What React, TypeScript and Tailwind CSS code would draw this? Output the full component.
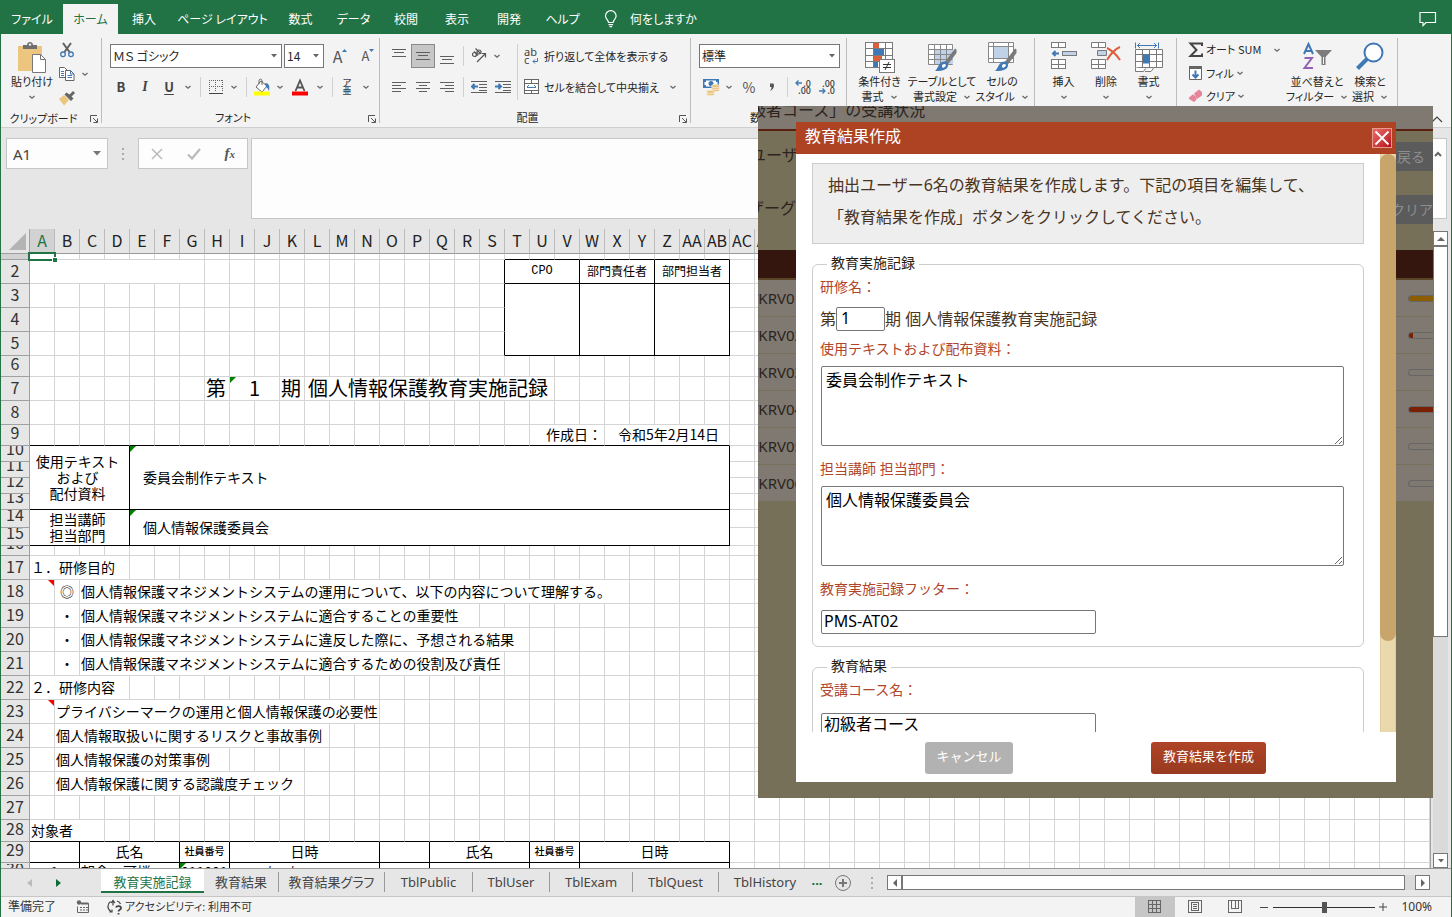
import React from "react";

/* ---------- small shared pieces ---------- */

const Chevron = ({ className = "" }: { className?: string }) => (
  <svg viewBox="0 0 8 8" className={`size-2 shrink-0 ${className}`} fill="none" stroke="#666" strokeWidth="1.2" aria-hidden="true">
    <path d="M1.500 3 4 5.300 6.500 3" />
  </svg>
);

const Caret = () => (
  <svg viewBox="0 0 6 4" className="h-1 w-1.5" aria-hidden="true">
    <path d="M0 0h6L3 3.500z" fill="#666" />
  </svg>
);

const Launcher = () => (
  <button type="button" aria-label="詳細設定" className="absolute right-1 bottom-1 size-2">
    <svg viewBox="0 0 8 8" className="size-2" fill="none" stroke="#555" strokeWidth="1">
      <path d="M.5 7V.5H7M3 3l4 4M7.500 3.500v4h-4" />
    </svg>
  </button>
);

const VSep = ({ className = "" }: { className?: string }) => (
  <div className={`flex justify-center ${className}`}>
    <div className="h-5 w-px bg-[#d0d0d0]" />
  </div>
);

function Group({ label, width, launcher, children }: { label: string; width: string; launcher?: boolean; children: React.ReactNode }) {
  return (
    <section className={`relative flex shrink-0 flex-col pt-1 ${width}`} aria-label={label}>
      <div className="flex h-[70px]">{children}</div>
      <div className={`text-center leading-5 ${launcher ? "pr-4" : ""}`}>{label}</div>
      {launcher && <Launcher />}
      <div className="absolute top-1 right-0 bottom-1 w-px bg-[#bdbdbd]" />
    </section>
  );
}

const Tool = ({ label, w, children, on }: { label: string; w: string; children: React.ReactNode; on?: boolean }) => (
  <button
    type="button"
    aria-label={label}
    className={`flex h-6 shrink-0 items-center justify-center ${w} ${on ? "border border-[#8a8a8a] bg-[#c6c6c6]" : ""}`}
  >
    {children}
  </button>
);

function BigButton({ w, icon, lines, chevronBelow }: { w: string; icon: React.ReactNode; lines: string[]; chevronBelow?: boolean }) {
  return (
    <button type="button" className={`flex shrink-0 flex-col items-center pt-1 leading-[15px] whitespace-nowrap ${w}`}>
      <span className="flex h-8 items-start">{icon}</span>
      {lines.map((l, i) => (
        <span key={l} className="flex items-center gap-1.5">
          {l}
          {!chevronBelow && i === lines.length - 1 && <Chevron />}
        </span>
      ))}
      {chevronBelow && <Chevron className="mt-1" />}
    </button>
  );
}

const Lines = ({ d }: { d: string }) => (
  <svg viewBox="0 0 16 16" className="size-4" fill="none" stroke="#5f5f5f" strokeWidth="1" shapeRendering="crispEdges">
    <path d={d} />
  </svg>
);

/* ---------- ribbon icons ---------- */

const PasteIcon = () => (
  <svg viewBox="0 0 30 32" className="h-8 w-[30px]">
    <path d="M1 4h24v25H1z" fill="#ecc57f" />
    <path d="M6 7V3h4c0-4 6-4 6 0h4v4z" fill="#6f6f6f" />
    <circle cx="13" cy="2.6" r="1.2" fill="#f3f3f3" />
    <path d="M15.500 12.500h8l5 5v13h-13z" fill="#fff" stroke="#777" />
    <path d="M23.500 12.500v5h5" fill="none" stroke="#777" />
  </svg>
);
const CutIcon = () => (
  <svg viewBox="0 0 16 16" className="size-4" fill="none">
    <path d="M4 1l6.500 9M12 1 5.500 10" stroke="#5f5f5f" strokeWidth="2" />
    <circle cx="4" cy="12.300" r="2.300" stroke="#3f78b4" strokeWidth="1.300" />
    <circle cx="12" cy="12.300" r="2.300" stroke="#3f78b4" strokeWidth="1.300" />
  </svg>
);
const CopyIcon = () => (
  <svg viewBox="0 0 16 16" className="size-4" strokeWidth="1">
    <path d="M.5 1.500h5l3 3v7h-8z" fill="#fff" stroke="#666" />
    <path d="M2 5.500h3M2 7.500h3M2 9.500h3" stroke="#3f78b4" />
    <path d="M6.500 4.500h5l3.500 3.500v6.500H6.500z" fill="#fff" stroke="#666" />
    <path d="M11.500 4.500V8H15M8.500 9.500h4.500M8.500 11.500h4.500" stroke="#3f78b4" fill="none" />
  </svg>
);
const PainterIcon = () => (
  <svg viewBox="0 0 16 16" className="size-4">
    <path d="M0 9l5-4 5 5-5 5.500z" fill="#ecc57f" />
    <path d="M5.500 4.500l2-2 3 2L14 1l2 2-3.500 3.500 2 2-2.500 2.500z" fill="#666" />
  </svg>
);
const BorderIcon = () => (
  <svg viewBox="0 0 14 14" className="size-3.5" fill="none" stroke="#666" shapeRendering="crispEdges">
    <path d="M0 .5h14M0 6.500h14M.5 0v12M6.500 0v12M13.500 0v12" strokeDasharray="1 1" />
    <path d="M0 13.500h14" stroke="#444" />
  </svg>
);
const BucketIcon = () => (
  <svg viewBox="0 0 18 18" className="size-[18px]" fill="none">
    <path d="M3 9l5-6 6 5-5 6z" fill="#fff" stroke="#666" />
    <path d="M6 6V3c0-2.500 3-2.500 3 0v4" stroke="#666" />
    <path d="M12 5c4 0 5 3 4 8-1-2-1-3-3-4z" fill="#3f78b4" />
    <path d="M1 13.500h16v4H1z" fill="#ff0" />
  </svg>
);
const FontColorIcon = () => (
  <svg viewBox="0 0 16 18" className="h-[18px] w-4">
    <path d="M3.500 13 8 2.500 12.500 13M5.200 9.500h5.600" fill="none" stroke="#555" strokeWidth="1.800" />
    <path d="M0 13.500h16v4H0z" fill="#f00" />
  </svg>
);
const OrientIcon = () => (
  <svg viewBox="0 0 16 16" className="size-4" fill="none" stroke="#555" strokeWidth="1.200">
    <circle cx="3.500" cy="6.500" r="2" />
    <path d="M3 3.500 7 7.500" />
    <circle cx="8" cy="4" r="2" />
    <path d="M4.500.5 9.500 5.500" />
    <path d="M6 14l8-8M10.500 5.500H14.500V9.500" />
  </svg>
);
const WrapIcon = () => (
  <span className="relative flex h-4 w-4 flex-col items-start font-['Noto_Sans',sans-serif] text-[11px] leading-[8px] text-[#444]">
    <span>ab</span>
    <span>c</span>
    <svg viewBox="0 0 6 6" className="absolute right-0.5 bottom-0 size-1.5" fill="none" stroke="#3f78b4">
      <path d="M5.500 0v3.500H1M3 1.500 1 3.500l2 2" />
    </svg>
  </span>
);
const MergeIcon = () => (
  <svg viewBox="0 0 16 16" className="size-4" fill="#fff" stroke="#666" shapeRendering="crispEdges">
    <path d="M.5.5h14v14H.5zM.5 4.500h14M.5 11.500h14M7.500.5v4M7.500 11.500v3" />
    <path d="M3 8h9M4.500 6.500 3 8l1.500 1.500M10.500 6.500 12 8l-1.500 1.500" stroke="#3f78b4" fill="none" />
  </svg>
);
const IndentIcon = ({ back }: { back?: boolean }) => (
  <svg viewBox="0 0 16 14" className="h-3.5 w-4" fill="none" stroke="#5f5f5f" shapeRendering="crispEdges">
    <path d="M0 1.500h16M8 4.500h8M8 7.500h8M8 10.500h8M0 12.500h16" />
    <path d={back ? "M7 6.500H1M3.500 4 1 6.500 3.500 9" : "M0 6.500h6M3.500 4 6 6.500 3.500 9"} stroke="#3f78b4" strokeWidth="2" shapeRendering="auto" />
  </svg>
);
const MoneyIcon = () => (
  <svg viewBox="0 0 18 18" className="size-[18px]">
    <path d="M1 1h16v9H1z" fill="#3f78b4" />
    <path d="M2.500 2.500h13v6h-13z" fill="#fff" />
    <path d="M2 2h2v2H2zM14 2h2v2h-2zM2 7h2v2H2z" fill="#3f78b4" />
    <circle cx="9" cy="5.500" r="2.500" fill="#3f78b4" />
    <g fill="#ecc57f" stroke="#f3f3f3" strokeWidth=".6">
      <ellipse cx="13.500" cy="12" rx="4" ry="1.700" />
      <ellipse cx="13.500" cy="10" rx="4" ry="1.700" />
      <ellipse cx="13.500" cy="8" rx="4" ry="1.700" />
      <ellipse cx="8.500" cy="16" rx="4" ry="1.700" />
      <ellipse cx="8.500" cy="13.800" rx="4" ry="1.700" />
    </g>
  </svg>
);
const DecimalIcon = ({ more }: { more?: boolean }) => (
  <span className="relative flex w-4 flex-col items-end text-[9px] leading-[7px] font-medium text-[#444]">
    <span>{more ? ".0" : ".00"}</span>
    <span>{more ? ".00" : ".0"}</span>
    <svg viewBox="0 0 7 6" className={`absolute left-0 h-1.5 w-[7px] ${more ? "top-0" : "bottom-0"}`} fill="none" stroke="#3f78b4" strokeWidth="1.300">
      <path d={more ? "M7 3H1M3.500.5 1 3l2.500 2.500" : "M0 3h6M3.500.5 6 3 3.500 5.500"} />
    </svg>
  </span>
);
const CondIcon = () => (
  <svg viewBox="0 0 30 31" className="h-[31px] w-[30px]" stroke="#7a7a7a" shapeRendering="crispEdges">
    <path d="M.5.5h27v25H.5z" fill="#fff" />
    <path d="M.5 6.500h27M.5 13.500h27M.5 19.500h27M8.500.5v25M20.500.5v25" fill="none" />
    <path d="M9 1h5v5H9zM9 14h8v5H9z" fill="#dd5f3c" stroke="none" />
    <path d="M9 7h10v6H9zM9 20h4v5H9z" fill="#3f78b4" stroke="none" />
    <path d="M14.500 17.500h15v13h-15z" fill="#fff" />
    <path d="M18 22.500h8M18 25.500h8M24 20l-4 8" stroke="#333" shapeRendering="auto" />
  </svg>
);
const Brush = () => (
  <g stroke="none">
    <path d="M17 21 28 6.500l1.500 1V11L20.500 23z" fill="#7a7a7a" />
    <path d="M15 20c3-1.500 6 0 6 3 0 4-4 6-13 6 3-2 3-7 7-9z" fill="#3f78b4" />
    <path d="M15 24c0-2 3-3 4-1-1 3-4 4-4 1z" fill="#fff" />
  </g>
);
const TableStyleIcon = () => (
  <svg viewBox="0 0 30 30" className="size-[30px]">
    <path d="M1.500 2.500h24v20h-24z" fill="#fff" stroke="#888" />
    <path d="M8 8h18v14H8z" fill="#c0d2e8" />
    <path d="M1.500 7.500h24M1.500 12.500h24M1.500 17.500h24M7.500 2.500v20M13.500 2.500v20M19.500 2.500v20" stroke="#888" fill="none" />
    <Brush />
  </svg>
);
const CellStyleIcon = () => (
  <svg viewBox="0 0 30 30" className="size-[30px]">
    <path d="M1.500.5h25v20h-25z" fill="#fff" stroke="#888" />
    <path d="M1.500 4.500h25M1.500 16.500h25M6.500.5v20M21.500.5v20" stroke="#888" fill="none" />
    <path d="M7 5h14v11H7z" fill="#c0d2e8" />
    <Brush />
  </svg>
);
const InsertIcon = () => (
  <svg viewBox="0 0 28 30" className="h-[30px] w-7" fill="#fff" stroke="#7a7a7a" shapeRendering="crispEdges">
    <path d="M1.500.5h14v5h-14zM8.500.5v5M1.500 17.500h14v9h-14zM8.500 17.500v9M1.500 22.500h14" />
    <path d="M12.500 9.500h14v4h-14z" fill="#c0d2e8" />
    <path d="M9 11.500H3M5.500 9 3 11.500 5.500 14" stroke="#3f78b4" strokeWidth="2" fill="none" shapeRendering="auto" />
  </svg>
);
const DeleteIcon = () => (
  <svg viewBox="0 0 30 30" className="size-[30px]" fill="#fff" stroke="#7a7a7a">
    <path d="M.5.500h14v5H.5zM7.500.5v5M.5 17.500h14v9H.5zM7.500 17.500v9M.5 22.500h14" />
    <path d="M6.500 8.500h9v5h-9z" fill="#c0d2e8" />
    <path d="M16 6c4 2 9 6 13 12M29 5c-5 2-10 8-13 13" fill="none" stroke="#dd5f3c" strokeWidth="2" />
  </svg>
);
const FormatIcon = () => (
  <svg viewBox="0 0 30 32" className="h-8 w-[30px]" fill="#fff" stroke="#7a7a7a">
    <path d="M1.500 7.500h27v18h-27z" />
    <path d="M1.500 12.500h27M1.500 19.500h27M8.500 7.500v18M15.500 7.500v18M22.500 7.500v18" fill="none" />
    <path d="M9 12.500h7v9H9z" fill="#3f78b4" stroke="none" />
    <path d="M1.500 25.500v4h8l2-3M11 29.500h6l3-4" />
    <path d="M3 3.500h20M6 1 3.500 3.500 6 6M20 1l2.500 2.500L20 6M1.500.5v6M24.500.5v6" fill="none" stroke="#3f78b4" />
  </svg>
);
const SortIcon = () => (
  <svg viewBox="0 0 30 30" className="size-[30px]" fill="none" strokeWidth="2">
    <path d="M2 12 6.500 2 11 12M3.500 9h6" stroke="#3f78b4" />
    <path d="M2.500 16h7.500L2.500 26H11" stroke="#9262b5" />
    <path d="M13 8h17l-6.500 7v8h-4v-8z" fill="#7d7d7d" />
    <path d="M21.500 15v7" stroke="#f3f3f3" strokeWidth="1" />
  </svg>
);
const FindIcon = () => (
  <svg viewBox="0 0 28 30" className="h-[30px] w-7" fill="none" stroke="#3f78b4">
    <circle cx="17.500" cy="10.500" r="9" strokeWidth="2" fill="#fff" />
    <path d="M11 17 1.500 26.500" strokeWidth="4" />
  </svg>
);

/* ---------- ribbon ---------- */

const tabs: [string, string][] = [
  ["ファイル", "w-[62px]"],
  ["ホーム", "w-[55px]"],
  ["挿入", "w-[52px]"],
  ["ページ レイアウト", "w-[105px]"],
  ["数式", "w-[51px]"],
  ["データ", "w-[55px]"],
  ["校閲", "w-[50px]"],
  ["表示", "w-[52px]"],
  ["開発", "w-[52px]"],
  ["ヘルプ", "w-[55px]"],
];

const TabBar = () => (
  <nav className="flex h-[34px] shrink-0 items-end bg-[#217346] text-[12px] text-white" aria-label="リボン">
    {tabs.map(([t, w]) => (
      <button key={t} type="button" className={`h-[30px] shrink-0 whitespace-nowrap ${w} ${t === "ホーム" ? "bg-[#f3f3f3] text-[#217346]" : ""}`}>
        {t}
      </button>
    ))}
    <button type="button" className="ml-3.5 flex h-[30px] items-center gap-3">
      <svg viewBox="0 0 14 18" className="h-[18px] w-3.5" fill="none" stroke="#fff" strokeWidth="1.200">
        <path d="M4.500 12.500C4.500 10 1.500 9 1.500 6a5.300 5.300 0 0 1 10.600 0c0 3-3 4-3 6.500zM4.500 14.700h4.600M5.500 16.700h2.600" />
      </svg>
      何をしますか
    </button>
    <button type="button" aria-label="コメント" className="mr-3.5 ml-auto flex h-[30px] items-center">
      <svg viewBox="0 0 18 16" className="h-4 w-[18px]" fill="none" stroke="#fff" strokeWidth="1.200">
        <path d="M1 1.500h15.500v10H7L4 14.500v-3H1z" />
      </svg>
    </button>
  </nav>
);

function Combo({ label, value, w }: { label: string; value: string; w: string }) {
  return (
    <label className={`relative flex h-6 shrink-0 items-center border border-[#767676] bg-white ${w}`}>
      <span className="sr-only">{label}</span>
      <select className="h-full w-full appearance-none bg-transparent pl-0.5 text-[12px] leading-5 outline-none" defaultValue={value}>
        <option>{value}</option>
      </select>
      <span className="pointer-events-none absolute right-1">
        <Caret />
      </span>
    </label>
  );
}

const Ribbon = () => (
  <div className="relative flex h-[94px] shrink-0 border-b border-[#cfcfcf] bg-[#f3f3f3] text-[11px] text-[#262626]">
    <Group label="クリップボード" width="w-[101px]" launcher>
      <BigButton w="w-[58px] pl-1" icon={<PasteIcon />} lines={["貼り付け"]} chevronBelow />
      <div className="flex flex-col">
        <Tool label="切り取り" w="w-4">
          <CutIcon />
        </Tool>
        <div className="flex">
          <Tool label="コピー" w="w-4">
            <CopyIcon />
          </Tool>
          <Tool label="コピーのオプション" w="w-5">
            <Chevron />
          </Tool>
        </div>
        <Tool label="書式のコピー" w="w-4">
          <PainterIcon />
        </Tool>
      </div>
    </Group>

    <Group label="フォント" width="w-[278px]" launcher>
      <div className="flex flex-col gap-[7px] pt-1.5 pl-[7px]">
        <div className="flex gap-0.5 pl-px">
          <Combo label="フォント名" value="ＭＳ ゴシック" w="w-[172px]" />
          <Combo label="フォント サイズ" value="14" w="w-10" />
          <button type="button" aria-label="フォントの拡大" className="flex w-7 items-center justify-center text-[16px] leading-6 text-[#555]">
            A
            <svg viewBox="0 0 5 3" className="mb-3 h-[3px] w-[5px]">
              <path d="M0 3h5L2.500 0z" fill="#3f78b4" />
            </svg>
          </button>
          <button type="button" aria-label="フォントの縮小" className="flex w-6 items-center justify-center text-[13px] leading-6 text-[#555]">
            A
            <svg viewBox="0 0 5 3" className="mb-3 h-[3px] w-[5px]">
              <path d="M0 0h5L2.500 3z" fill="#3f78b4" />
            </svg>
          </button>
        </div>
        <div className="flex items-center text-[13px] leading-5 text-[#444]">
          <Tool label="太字" w="w-6">
            <b>B</b>
          </Tool>
          <Tool label="斜体" w="w-6">
            <i className="font-['Liberation_Serif',serif] text-[14px] font-bold">I</i>
          </Tool>
          <Tool label="下線" w="w-6">
            <span className="font-bold underline underline-offset-2">U</span>
          </Tool>
          <Tool label="下線の種類" w="w-3.5">
            <Chevron />
          </Tool>
          <VSep className="w-[11px]" />
          <Tool label="罫線" w="w-5">
            <BorderIcon />
          </Tool>
          <Tool label="罫線の種類" w="w-4">
            <Chevron />
          </Tool>
          <VSep className="w-2" />
          <Tool label="塗りつぶしの色" w="w-6">
            <BucketIcon />
          </Tool>
          <Tool label="塗りつぶしの色の選択" w="w-3">
            <Chevron />
          </Tool>
          <Tool label="フォントの色" w="w-7">
            <FontColorIcon />
          </Tool>
          <Tool label="フォントの色の選択" w="w-3">
            <Chevron />
          </Tool>
          <VSep className="w-3" />
          <Tool label="ふりがな" w="w-[18px]">
            <span className="flex flex-col items-center text-[9px] leading-[8px] font-medium">
              <span>ア</span>
              <span>亜</span>
            </span>
          </Tool>
          <Tool label="ふりがなの設定" w="w-5">
            <Chevron />
          </Tool>
        </div>
      </div>
    </Group>

    <Group label="配置" width="w-[311px]" launcher>
      <div className="flex flex-col gap-[7px] pt-1.5 pl-[7px]">
        <div className="flex items-center">
          <Tool label="上揃え" w="w-6">
            <Lines d="M1 1.500h14M3 4.500h10M1 8.500h14" />
          </Tool>
          <Tool label="上下中央揃え" w="w-6" on>
            <Lines d="M1 4.500h14M3 7.500h10M1 11.500h14" />
          </Tool>
          <Tool label="下揃え" w="w-6">
            <Lines d="M1 8.500h14M3 11.500h10M1 15.500h14" />
          </Tool>
          <VSep className="w-2" />
          <Tool label="方向" w="w-6">
            <OrientIcon />
          </Tool>
          <Tool label="方向の選択" w="w-3">
            <Chevron />
          </Tool>
        </div>
        <div className="flex items-center">
          <Tool label="左揃え" w="w-6">
            <Lines d="M1 3.500h14M1 6.500h9M1 9.500h14M1 12.500h9" />
          </Tool>
          <Tool label="中央揃え" w="w-6">
            <Lines d="M1 3.500h14M4 6.500h8M1 9.500h14M4 12.500h8" />
          </Tool>
          <Tool label="右揃え" w="w-6">
            <Lines d="M1 3.500h14M6 6.500h9M1 9.500h14M6 12.500h9" />
          </Tool>
          <VSep className="w-2" />
          <Tool label="インデントを減らす" w="w-6">
            <IndentIcon back />
          </Tool>
          <Tool label="インデントを増やす" w="w-6">
            <IndentIcon />
          </Tool>
        </div>
      </div>
      <div className="mt-1.5 ml-0.5 h-14 w-px bg-[#d0d0d0]" />
      <div className="flex flex-col gap-[7px] pt-1.5 pl-1.5">
        <button type="button" className="flex h-6 items-center gap-1 whitespace-nowrap">
          <WrapIcon />
          折り返して全体を表示する
        </button>
        <button type="button" className="flex h-6 items-center gap-1 whitespace-nowrap">
          <MergeIcon />
          セルを結合して中央揃え
          <Chevron className="ml-1.5" />
        </button>
      </div>
    </Group>

    <Group label="数値" width="w-[156px]" launcher>
      <div className="flex flex-col gap-[7px] pt-1.5 pl-2">
        <Combo label="表示形式" value="標準" w="w-[141px]" />
        <div className="flex items-center text-[14px] leading-5 text-[#555]">
          <Tool label="通貨表示形式" w="w-6">
            <MoneyIcon />
          </Tool>
          <Tool label="通貨の選択" w="w-3">
            <Chevron />
          </Tool>
          <Tool label="パーセント" w="w-7">
            %
          </Tool>
          <Tool label="桁区切り" w="w-[18px]">
            <svg viewBox="0 0 6 8" className="h-2 w-1.5">
              <path d="M1 .5h3.500L5 2.500C5 5 3.500 7 1 8c1-1.500 1.500-2.500 1.500-4H1z" fill="#555" />
            </svg>
          </Tool>
          <VSep className="w-3" />
          <Tool label="小数点以下を増やす" w="w-5">
            <DecimalIcon more />
          </Tool>
          <Tool label="小数点以下を減らす" w="w-7">
            <DecimalIcon />
          </Tool>
        </div>
      </div>
    </Group>

    <Group label="スタイル" width="w-[188px]">
      <BigButton w="w-[65px]" icon={<CondIcon />} lines={["条件付き", "書式"]} />
      <BigButton w="w-[60px]" icon={<TableStyleIcon />} lines={["テーブルとして", "書式設定"]} />
      <BigButton w="w-[60px]" icon={<CellStyleIcon />} lines={["セルの", "スタイル"]} />
    </Group>

    <Group label="セル" width="w-[142px]">
      <BigButton w="w-[57px]" icon={<InsertIcon />} lines={["挿入"]} chevronBelow />
      <BigButton w="w-7" icon={<DeleteIcon />} lines={["削除"]} chevronBelow />
      <BigButton w="w-[57px]" icon={<FormatIcon />} lines={["書式"]} chevronBelow />
    </Group>

    <Group label="編集" width="w-[221px]">
      <div className="flex w-[110px] flex-col pl-[11px]">
        <button type="button" className="flex h-6 items-center gap-0.5 whitespace-nowrap">
          <svg viewBox="0 0 16 16" className="size-4" fill="none" stroke="#444" strokeWidth="2">
            <path d="M14 4V1.500H2.500L8.500 8l-6 6H14V11.500" />
          </svg>
          オート SUM
          <Chevron className="ml-2.5" />
        </button>
        <button type="button" className="flex h-6 items-center gap-0.5 whitespace-nowrap">
          <svg viewBox="0 0 16 16" className="size-4" fill="#fff" stroke="#666">
            <path d="M1.500 1.500h12v13h-12z" />
            <path d="M1 1h13v3H1z" fill="#666" stroke="none" />
            <path d="M7.500 5.500v7M4.500 9.500l3 3 3-3" fill="none" stroke="#3f78b4" strokeWidth="2" />
          </svg>
          フィル
          <Chevron />
        </button>
        <button type="button" className="flex h-6 items-center gap-0.5 whitespace-nowrap">
          <svg viewBox="0 0 16 16" className="size-4">
            <path d="M6 5.500 11 1.500l3 2.500v3.500L9 11z" fill="#e8849a" />
            <path d="M1 9.500l4-3.200 3.300 2.800v3L6 14l-5-3z" fill="#e8849a" />
          </svg>
          クリア
          <Chevron />
        </button>
      </div>
      <BigButton w="w-[60px]" icon={<SortIcon />} lines={["並べ替えと", "フィルター"]} />
      <BigButton w="w-[46px]" icon={<FindIcon />} lines={["検索と", "選択"]} />
    </Group>
    <button type="button" aria-label="リボンを折りたたむ" className="mt-auto mr-2 mb-1 ml-auto">
      <svg viewBox="0 0 12 8" className="h-2 w-3" fill="none" stroke="#444" strokeWidth="1.200">
        <path d="M1 7l5-5 5 5" />
      </svg>
    </button>
  </div>
);

/* ---------- formula bar ---------- */

const FormulaBar = () => (
  <div className="flex h-[101px] shrink-0 items-start bg-[#e6e6e6] pt-2.5 pr-1 pl-[5px]">
    <label className="relative flex h-[31px] w-[102px] shrink-0 items-center border border-[#c6c6c6] bg-[#fdfdfd]">
      <span className="sr-only">名前ボックス</span>
      <input className="w-full bg-transparent pt-0.5 pl-1.5 font-['Noto_Sans',sans-serif] text-[15px] text-[#444] outline-none" defaultValue="A1" />
      <svg viewBox="0 0 8 5" className="absolute right-1.5 h-[5px] w-2">
        <path d="M0 0h8L4 4.500z" fill="#777" />
      </svg>
    </label>
    <div className="flex h-[31px] w-[30px] shrink-0 flex-col items-center justify-center gap-[3px]">
      <i className="size-0.5 bg-[#aaa]" />
      <i className="size-0.5 bg-[#aaa]" />
      <i className="size-0.5 bg-[#aaa]" />
    </div>
    <div className="flex h-[31px] w-[110px] shrink-0 items-center justify-around border border-[#c6c6c6] bg-[#fdfdfd]">
      <button type="button" aria-label="キャンセル">
        <svg viewBox="0 0 12 12" className="size-3" stroke="#bbb" strokeWidth="1.500">
          <path d="M1 1l10 10M11 1 1 11" />
        </svg>
      </button>
      <button type="button" aria-label="入力">
        <svg viewBox="0 0 14 12" className="h-3 w-3.5" fill="none" stroke="#bbb" strokeWidth="2.200">
          <path d="M1 6.500 5 10.500 13 1" />
        </svg>
      </button>
      <button type="button" aria-label="関数の挿入" className="font-['Liberation_Serif',serif] text-[15px] leading-4 font-bold text-[#555] italic">
        f<span className="text-[11px]">x</span>
      </button>
    </div>
    <div className="ml-[3px] flex h-[81px] flex-1 border border-[#c6c6c6] bg-[#fdfdfd]">
      <textarea aria-label="数式バー" className="flex-1 resize-none bg-transparent outline-none" />
      <button type="button" aria-label="数式バーの展開" className="flex w-4 justify-center pt-3">
        <svg viewBox="0 0 8 6" className="h-1.5 w-2" fill="none" stroke="#666" strokeWidth="2">
          <path d="M1 5l3-3 3 3" />
        </svg>
      </button>
    </div>
  </div>
);

/* ---------- worksheet ---------- */

const COLS = 60;
const rowHeights = [
  6, 24, 24, 24, 24, 21, 24, 24, 21, 16, 16, 16, 16, 18, 18, 10, 24, 24, 24, 24, 24, 24, 24, 24, 24, 24, 24, 22, 21, 18,
];

const colName = (i: number) => (i < 26 ? "" : String.fromCharCode(64 + Math.floor(i / 26))) + String.fromCharCode(65 + (i % 26));

type Cell = { c: number; cs?: number; rs?: number; lines?: string[]; cls?: string; mark?: "error" | "note"; plain?: boolean };

const cells: Record<number, Cell[]> = {
  2: [
    { c: 0, cs: 7, plain: true },
    { c: 19, cs: 3, lines: ["CPO"], cls: "text-center text-[12px] font-['Liberation_Mono',monospace]" },
    { c: 22, cs: 3, lines: ["部門責任者"], cls: "text-center text-[12px]" },
    { c: 25, cs: 3, lines: ["部門担当者"], cls: "text-center text-[12px]" },
  ],
  3: [
    { c: 19, cs: 3, rs: 3 },
    { c: 22, cs: 3, rs: 3 },
    { c: 25, cs: 3, rs: 3 },
  ],
  7: [
    { c: 7, lines: ["第"], cls: "text-[20px]" },
    { c: 8, cs: 2, lines: ["1"], cls: "text-center text-[20px]", mark: "error" },
    { c: 10, lines: ["期"], cls: "text-[20px]" },
    { c: 11, cs: 10, lines: ["個人情報保護教育実施記録"], cls: "pl-[3px] text-[20px]" },
  ],
  9: [
    { c: 20, cs: 3, lines: ["作成日："], cls: "pr-0.5 text-right" },
    { c: 23, cs: 5, lines: ["令和5年2月14日"], cls: "pr-2.5 text-right" },
  ],
  10: [
    { c: 0, cs: 4, rs: 4, lines: ["使用テキスト", "および", "配付資料"], cls: "pr-1 text-center" },
    { c: 4, cs: 24, rs: 4, lines: ["委員会制作テキスト"], cls: "pl-[13px]", mark: "error" },
  ],
  14: [
    { c: 0, cs: 4, rs: 2, lines: ["担当講師", "担当部門"], cls: "pr-1 text-center" },
    { c: 4, cs: 24, rs: 2, lines: ["個人情報保護委員会"], cls: "pl-[13px]", mark: "error" },
  ],
  17: [{ c: 0, cs: 4, lines: ["１．研修目的"] }],
  18: [
    { c: 0, mark: "note" },
    { c: 1, lines: ["◎"], cls: "text-center" },
    { c: 2, cs: 22, lines: ["個人情報保護マネジメントシステムの運用について、以下の内容について理解する。"] },
  ],
  19: [
    { c: 1, lines: ["・"], cls: "text-center" },
    { c: 2, cs: 16, lines: ["個人情報保護マネジメントシステムに適合することの重要性"] },
  ],
  20: [
    { c: 1, lines: ["・"], cls: "text-center" },
    { c: 2, cs: 18, lines: ["個人情報保護マネジメントシステムに違反した際に、予想される結果"] },
  ],
  21: [
    { c: 1, lines: ["・"], cls: "text-center" },
    { c: 2, cs: 17, lines: ["個人情報保護マネジメントシステムに適合するための役割及び責任"] },
  ],
  22: [{ c: 0, cs: 4, lines: ["２．研修内容"] }],
  23: [
    { c: 0, mark: "note" },
    { c: 1, cs: 13, lines: ["プライバシーマークの運用と個人情報保護の必要性"] },
  ],
  24: [{ c: 1, cs: 11, lines: ["個人情報取扱いに関するリスクと事故事例"] }],
  25: [{ c: 1, cs: 7, lines: ["個人情報保護の対策事例"] }],
  26: [{ c: 1, cs: 10, lines: ["個人情報保護に関する認識度チェック"] }],
  28: [{ c: 0, cs: 3, lines: ["対象者"] }],
  29: [
    { c: 0, cs: 2 },
    { c: 2, cs: 4, lines: ["氏名"], cls: "text-center" },
    { c: 6, cs: 2, lines: ["社員番号"], cls: "text-center text-[10px] font-medium" },
    { c: 8, cs: 6, lines: ["日時"], cls: "text-center" },
    { c: 14, cs: 2 },
    { c: 16, cs: 4, lines: ["氏名"], cls: "text-center" },
    { c: 20, cs: 2, lines: ["社員番号"], cls: "text-center text-[10px] font-medium" },
    { c: 22, cs: 6, lines: ["日時"], cls: "text-center" },
  ],
  30: [
    { c: 0, cs: 2, lines: ["1"], cls: "text-center" },
    { c: 2, cs: 4, lines: ["朝倉　可憐"] },
    { c: 6, cs: 2, lines: ["011001"], mark: "error" },
    { c: 8, cs: 6, lines: ["/　 /　　:　:"], cls: "text-center" },
    { c: 14, cs: 2 },
    { c: 16, cs: 4 },
    { c: 20, cs: 2 },
    { c: 22, cs: 6 },
  ],
};

/* Outlined ranges: first row, first column, last row, last column. */
const boxes: number[][] = [2, 3, 10, 14, 29, 30].flatMap((r) =>
  cells[r].filter((x) => !x.plain).map((x) => [r, x.c, r + (x.rs ?? 1) - 1, x.c + (x.cs ?? 1) - 1])
);

function SheetRow({ r }: { r: number }) {
  const h = rowHeights[r - 1];
  const own = cells[r] ?? [];
  const out: React.ReactNode[] = [];
  for (let c = 0; c < COLS; ) {
    const covered = Object.entries(cells).some(([k, list]) => +k < r && list.some((x) => +k + (x.rs ?? 1) > r && c >= x.c && c < x.c + (x.cs ?? 1)));
    if (covered) {
      c++;
      continue;
    }
    const cell = own.find((x) => x.c === c) ?? { c };
    const cs = cell.cs ?? 1;
    const rs = cell.rs ?? 1;
    const lastR = r + rs - 1;
    const lastC = c + cs - 1;
    const bottom = boxes.some((b) => b[1] <= lastC && b[3] >= cell.c && (b[2] === lastR || b[0] === lastR + 1));
    const right = boxes.some((b) => b[0] <= lastR && b[2] >= r && (b[3] === lastC || b[1] === lastC + 1));
    out.push(
      <td
        key={c}
        colSpan={cs}
        rowSpan={rs}
        className={`relative border-r border-b p-0 align-middle leading-4 whitespace-nowrap ${cell.lines ? "pb-0.5" : ""} ${
          bottom ? "border-b-black" : "border-b-[#d4d4d4]"
        } ${right ? "border-r-black" : "border-r-[#d4d4d4]"} ${
          cell.cls?.includes("pl-") || cell.cls?.includes("text-center") ? "" : "pl-px"
        } ${cell.cls ?? ""}`}
      >
        {cell.lines?.map((l) => (
          <div key={l}>{l}</div>
        ))}
        {cell.mark === "error" && <i className="absolute top-0 left-0 border-t-[6px] border-r-[6px] border-t-[#008000] border-r-transparent" />}
        {cell.mark === "note" && <i className="absolute top-0 right-0 border-t-[6px] border-l-[6px] border-t-[#ff0000] border-l-transparent" />}
      </td>
    );
    c += cs;
  }
  return (
    <tr style={{ height: h }}>
      <th
        scope="row"
        className={`border-r border-b border-[#a0a0a0] p-0 align-bottom text-[16px] font-normal text-[#333] ${r === 1 ? "bg-[#d2d2d2]" : "bg-[#e6e6e6]"}`}
      >
        <div className="flex items-end justify-center overflow-hidden leading-[25px]" style={{ height: h - 1 }}>
          {r === 1 ? "" : r}
        </div>
      </th>
      {out}
    </tr>
  );
}

const Sheet = () => (
  <div className="flex min-h-0 flex-1 bg-[#e6e6e6]">
    <div className="relative h-full min-w-0 flex-1 overflow-hidden border-r border-[#a0a0a0] bg-white">
      <table className="w-[1529px] table-fixed border-separate border-spacing-0 text-[14px] text-black">
        <colgroup>
          <col className="w-[29px]" />
          {Array.from({ length: COLS }, (_, i) => (
            <col key={i} className="w-[25px]" />
          ))}
        </colgroup>
        <thead>
          <tr className="h-[25px]">
            <th className="border-r border-b border-[#a0a0a0] bg-[#e6e6e6] p-0">
              <svg viewBox="0 0 17 17" className="ml-2 size-[17px]">
                <path d="M17 0v17H0z" fill="#b4b4b4" />
              </svg>
            </th>
            {Array.from({ length: COLS }, (_, i) => (
              <th
                key={i}
                scope="col"
                className={`border-r border-b border-r-[#bcbcbc] border-b-[#999] p-0 pb-0.5 text-[16px] leading-[22px] font-normal ${
                  i === 0 ? "bg-[#d2d2d2] text-[#217346]" : "bg-[#e6e6e6] text-[#222]"
                }`}
              >
                {colName(i)}
              </th>
            ))}
          </tr>
        </thead>
        <tbody>
          {rowHeights.map((_, i) => (
            <SheetRow key={i} r={i + 1} />
          ))}
        </tbody>
      </table>
      <div className="absolute top-[23px] left-[27px] h-[9px] w-7 border-2 border-[#217346]">
        <i className="absolute -right-[3px] -bottom-[3px] size-[5px] border-t border-l border-white bg-[#217346]" />
      </div>
    </div>
    <div className="flex w-5 flex-col pt-0.5 pr-[3px] pl-0.5">
      <button type="button" aria-label="上へスクロール" className="flex h-[15px] items-center justify-center border border-[#777] bg-white">
        <svg viewBox="0 0 8 4" className="h-1 w-2">
          <path d="M0 4h8L4 0z" fill="#666" />
        </svg>
      </button>
      <div className="flex-1 bg-[#dadada]">
        <div className="h-[391px] border border-[#777] bg-white" />
      </div>
      <button type="button" aria-label="下へスクロール" className="flex h-[15px] items-center justify-center border border-[#777] bg-white">
        <Caret />
      </button>
    </div>
  </div>
);

/* ---------- sheet tabs and status bar ---------- */

const sheetTabs: [string, string][] = [
  ["教育結果", "w-[75px]"],
  ["教育結果グラフ", "w-[106px]"],
  ["TblPublic", "w-[88px]"],
  ["TblUser", "w-[77px]"],
  ["TblExam", "w-[83px]"],
  ["TblQuest", "w-[86px]"],
];

const SheetTabs = () => (
  <div className="flex h-7 shrink-0 items-center border-t border-[#999] bg-[#e6e6e6] text-[13px] text-[#444]">
    <div className="flex w-[100px] shrink-0 items-center">
      <button type="button" aria-label="前のシート" className="ml-[26px]">
        <svg viewBox="0 0 5 8" className="h-2 w-[5px]">
          <path d="M5 0v8L0 4z" fill="#bbb" />
        </svg>
      </button>
      <button type="button" aria-label="次のシート" className="ml-6">
        <svg viewBox="0 0 5 8" className="h-2 w-[5px]">
          <path d="M0 0v8l5-4z" fill="#0e6b37" />
        </svg>
      </button>
    </div>
    <button type="button" className="mb-[3px] h-6 w-[103px] shrink-0 border-b-2 border-[#217346] bg-white pt-1 text-[#217346]">
      教育実施記録
    </button>
    {sheetTabs.map(([t, w]) => (
      <button key={t} type="button" className={`mb-0.5 h-5 shrink-0 border-r border-[#999] leading-5 whitespace-nowrap ${w}`}>
        {t}
      </button>
    ))}
    <button type="button" className="mb-0.5 h-5 w-[92px] shrink-0 leading-5">
      TblHistory
    </button>
    <button type="button" aria-label="その他のシート" className="mb-1 w-3 shrink-0 font-bold text-[#0e6b37]">
      ...
    </button>
    <button type="button" aria-label="新しいシート" className="ml-3 shrink-0">
      <svg viewBox="0 0 16 16" className="size-4" fill="none" stroke="#777">
        <circle cx="8" cy="8" r="7.500" />
        <path d="M4 8h8M8 4v8" strokeWidth="2" />
      </svg>
    </button>
    <div className="ml-5 flex w-0.5 shrink-0 flex-col gap-[3px]">
      <i className="size-0.5 bg-[#aaa]" />
      <i className="size-0.5 bg-[#aaa]" />
      <i className="size-0.5 bg-[#aaa]" />
    </div>
    <div className="mr-[21px] ml-3.5 flex h-[15px] flex-1 bg-[#dadada]">
      <button type="button" aria-label="左へスクロール" className="flex w-[15px] items-center justify-center border border-[#777] bg-white">
        <svg viewBox="0 0 4 8" className="h-2 w-1">
          <path d="M4 0v8L0 4z" fill="#666" />
        </svg>
      </button>
      <div className="mr-2.5 flex-1 border border-[#777] bg-white" />
      <button type="button" aria-label="右へスクロール" className="flex w-[15px] items-center justify-center border border-[#777] bg-white">
        <svg viewBox="0 0 4 8" className="h-2 w-1">
          <path d="M0 0v8l4-4z" fill="#666" />
        </svg>
      </button>
    </div>
  </div>
);

const StatusBar = () => (
  <footer className="flex h-[21px] shrink-0 items-center border-t border-[#c6c6c6] bg-[#f3f3f3] text-[12px] leading-5 text-[#333]">
    <span className="ml-[7px] w-[68px] shrink-0">準備完了</span>
    <svg viewBox="0 0 14 14" className="size-3.5 shrink-0" fill="none" stroke="#666">
      <path d="M4.500 3.500h8v9h-11v-6" />
      <path d="M5 3.500h7.500" strokeWidth="2" />
      <path d="M4 7.500h2M7 7.500h2M10 7.500h2M4 10h2M7 10h2M10 10h2" />
      <circle cx="3" cy="2.500" r="2.200" fill="#666" stroke="none" />
    </svg>
    <svg viewBox="0 0 16 16" className="ml-[17px] size-4 shrink-0" fill="none" stroke="#444" strokeWidth="1.200">
      <path d="M3.500 2.500C0 5 0 10 4 12.500M2.500 13h2.500v-2.500M6 1.500v5M4 4l2-2.500L8 4M10 2c2 .5 3 1.500 3.500 3" />
      <path d="M9 8.500c.5-2 5-2 5 .5 0 2-2.500 1.500-2.500 3.500M11.500 14v1.500" strokeWidth="1.800" />
    </svg>
    <span className="ml-0.5 text-[11px] whitespace-nowrap">アクセシビリティ: 利用不可</span>
    <div className="ml-auto flex h-full items-center">
      <button type="button" aria-label="標準" className="flex h-full w-10 items-center justify-center bg-[#c6c6c6]">
        <svg viewBox="0 0 14 14" className="size-3.5" fill="none" stroke="#666" shapeRendering="crispEdges">
          <path d="M.5.5h12v12H.5zM4.500.5v12M8.500.5v12M.5 4.500h12M.5 8.500h12" />
        </svg>
      </button>
      <button type="button" aria-label="ページ レイアウト" className="flex h-full w-10 items-center justify-center">
        <svg viewBox="0 0 14 14" className="size-3.5" fill="none" stroke="#666" shapeRendering="crispEdges">
          <path d="M.5.500h13v12H.5zM3.500 2.500h7v8h-7zM5 4.500h4M5 6.500h4M5 8.500h4" />
        </svg>
      </button>
      <button type="button" aria-label="改ページ プレビュー" className="flex h-full w-10 items-center justify-center">
        <svg viewBox="0 0 14 14" className="size-3.5" fill="none" stroke="#666" shapeRendering="crispEdges">
          <path d="M.5.500h13v12H.5zM3.500 1v7h7V1M7.500 1v7" />
        </svg>
      </button>
      <button type="button" aria-label="縮小" className="flex w-[18px] items-center justify-center">
        <i className="h-px w-2 bg-[#444]" />
      </button>
      <input
        type="range"
        aria-label="ズーム"
        defaultValue={50}
        className="h-3 w-[102px] appearance-none bg-[linear-gradient(#333,#333)] bg-size-[100%_1px] bg-center bg-no-repeat [&::-webkit-slider-thumb]:h-[11px] [&::-webkit-slider-thumb]:w-[5px] [&::-webkit-slider-thumb]:appearance-none [&::-webkit-slider-thumb]:bg-[#555]"
      />
      <button type="button" aria-label="拡大" className="flex w-4 items-center justify-center">
        <svg viewBox="0 0 8 8" className="size-2" stroke="#444">
          <path d="M0 4h8M4 0v8" />
        </svg>
      </button>
      <span className="mr-[19px] ml-2.5">100%</span>
    </div>
  </footer>
);

/* ---------- e-learning window ---------- */

const progress = ["w-full bg-[#8b5d00]", "w-1 bg-[#7a1f00]", "w-0", "w-full bg-[#7a1f00]", "w-0", "w-0"];

const CourseList = () => (
  <div className="flex h-full flex-col bg-[#777059] text-[16px] whitespace-nowrap text-[#2c241d]">
    <h2 className="flex h-[25px] shrink-0 items-start overflow-hidden border-b-2 border-[#5b2110] bg-[#7f7971] leading-[8px]">
      <span className="-ml-2">級者コース」の受講状況</span>
    </h2>
    <div className="mt-[11px] flex h-[29px] shrink-0 items-center justify-between">
      <span className="-ml-2 pb-1 leading-6">ユーザーID</span>
      <button type="button" className="h-full w-16 bg-[#5b5b5b] pr-2 text-right text-[14px] text-[#8d8d8d]">
        に戻る
      </button>
    </div>
    <div className="mt-6 flex h-[29px] shrink-0 items-center justify-between">
      <span className="-ml-2.5 pb-1 leading-6">ザーグループ</span>
      <button type="button" className="h-full w-16 bg-[#5b5b5b] text-right text-[14px] text-[#8d8d8d]">
        クリア
      </button>
    </div>
    <div className="mt-[26px] h-[30px] shrink-0 border-b-2 border-[#5a4426] bg-[#34160e]" />
    {progress.map((p, i) => (
      <div key={i} className="flex h-[37px] shrink-0 items-center justify-between border-b border-[#777059] bg-[#7f7971] text-[15px]">
        <span className="-ml-2">TKRV0{i + 1}</span>
        <span className="flex h-[7px] w-[25px] overflow-hidden rounded-l-full border border-r-0 border-[#666]">
          <span className={p} />
        </span>
      </div>
    ))}
  </div>
);

const labelCls = "block h-6 text-[14px] leading-[22px] text-[#b0452a]";
const fieldCls = "border border-[#767676] rounded-xs bg-white text-[16px] text-black outline-none";

const Dialog = () => (
  <div role="dialog" aria-label="教育結果作成" className="absolute top-4 left-[38px] flex h-[660px] w-[600px] flex-col bg-white text-[16px] text-[#49351f]">
    <header className="flex h-8 shrink-0 items-center justify-between bg-[#ae4324] pr-1 pl-[9px] text-white">
      <h1 className="pb-1 leading-7">教育結果作成</h1>
      <button type="button" aria-label="閉じる" className="flex size-5 items-center justify-center border border-[#e89a90] bg-linear-to-br from-[#ec6a6a] to-[#b8001a]">
        <svg viewBox="0 0 16 16" className="size-4" stroke="#fff" strokeWidth="1.800">
          <path d="M1.500 1.500l13 13M14.500 1.500l-13 13" />
        </svg>
      </button>
    </header>
    <div className="flex min-h-0 flex-1">
      <div className="flex flex-1 flex-col gap-2 overflow-hidden px-4 pt-[9px]">
        <p className="shrink-0 border border-[#ccc] bg-[#eee] px-[15px] pt-[5px] pb-2.5 leading-8">
          抽出ユーザー6名の教育結果を作成します。下記の項目を編集して、
          <br />
          「教育結果を作成」ボタンをクリックしてください。
        </p>
        <fieldset className="shrink-0 rounded-md border border-[#ccc] px-[7px] pb-3">
          <legend className="ml-[7px] h-6 px-1 text-[14px] leading-[22px] text-[#2b1d12]">教育実施記録</legend>
          <label htmlFor="term" className={labelCls}>
            研修名：
          </label>
          <div className="flex h-[38px] items-center">
            第
            <input id="term" className={`h-6 w-[49px] pb-0.5 pl-1 ${fieldCls}`} defaultValue="1" />期 個人情報保護教育実施記録
          </div>
          <label htmlFor="texts" className={labelCls}>
            使用テキストおよび配布資料：
          </label>
          <textarea id="texts" className={`mt-1 ml-px block h-20 w-[523px] resize px-1 py-px leading-6 ${fieldCls}`} defaultValue="委員会制作テキスト" />
          <label htmlFor="teacher" className={`mt-3 ${labelCls}`}>
            担当講師 担当部門：
          </label>
          <textarea id="teacher" className={`mt-1 ml-px block h-20 w-[523px] resize px-1 py-px leading-6 ${fieldCls}`} defaultValue="個人情報保護委員会" />
          <label htmlFor="footer" className={`mt-3 ${labelCls}`}>
            教育実施記録フッター：
          </label>
          <input id="footer" className={`mt-2 ml-px block h-6 w-[275px] px-0.5 pb-0.5 ${fieldCls}`} defaultValue="PMS-AT02" />
        </fieldset>
        <fieldset className="shrink-0 rounded-md border border-[#ccc] px-[7px] pb-3">
          <legend className="ml-[7px] h-6 px-1 text-[14px] leading-[22px] text-[#2b1d12]">教育結果</legend>
          <label htmlFor="course" className={labelCls}>
            受講コース名：
          </label>
          <input id="course" className={`mt-2.5 ml-px block h-6 w-[275px] px-0.5 pb-0.5 ${fieldCls}`} defaultValue="初級者コース" />
        </fieldset>
      </div>
      <div className="w-4 border-x border-[#dfcb9c] bg-[#e9d9ac]">
        <div className="-mx-px h-[487px] rounded-full bg-[#c8a56b]" />
      </div>
    </div>
    <div className="flex h-[50px] shrink-0 items-center px-[129px] pt-0.5">
      <button type="button" className="h-8 w-[88px] shrink-0 rounded-[3px] bg-[#b2b2b2] pb-0.5 text-[13px] text-white">
        キャンセル
      </button>
      <button type="button" className="ml-[138px] h-8 w-[115px] shrink-0 rounded-[3px] bg-linear-to-b from-[#b04427] to-[#983a1f] pb-0.5 text-[13px] text-white">
        教育結果を作成
      </button>
    </div>
  </div>
);

export default function App() {
  return (
    <main className="relative flex h-screen min-h-[480px] flex-col overflow-hidden border-x border-[#217346] bg-[#e6e6e6] font-['Noto_Sans_CJK_JP','Noto_Sans',sans-serif]">
      <div className="[font-feature-settings:'palt']">
        <TabBar />
        <Ribbon />
      </div>
      <FormulaBar />
      <Sheet />
      <div className="font-['Noto_Sans','Noto_Sans_CJK_JP',sans-serif] [font-feature-settings:'palt']">
        <SheetTabs />
        <StatusBar />
      </div>
      <div className="absolute top-[106px] right-[18px] h-[692px] w-[675px] overflow-hidden font-['Noto_Sans','Noto_Sans_CJK_JP',sans-serif]">
        <CourseList />
        <Dialog />
      </div>
    </main>
  );
}
